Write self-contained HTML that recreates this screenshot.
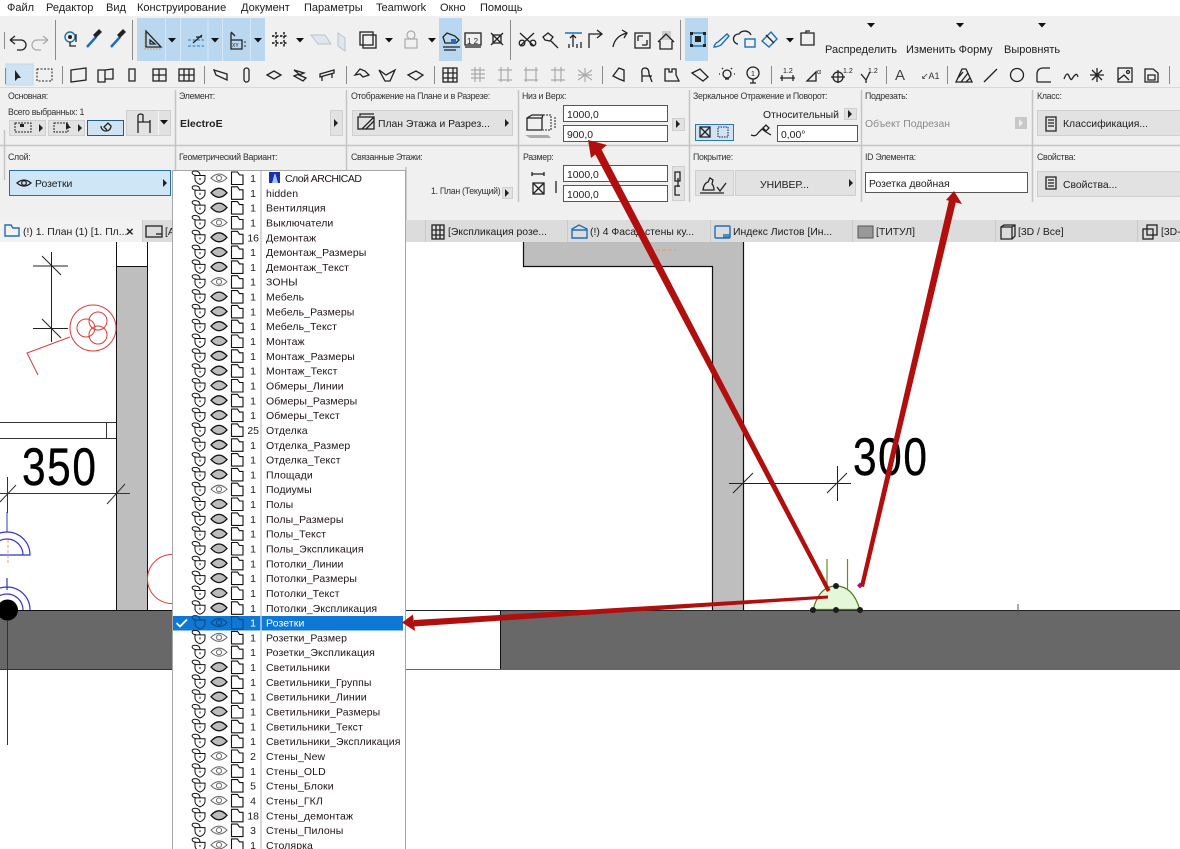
<!DOCTYPE html>
<html lang="ru"><head><meta charset="utf-8"><title>ARCHICAD</title>
<style>
html,body{margin:0;padding:0;background:#fff;width:1180px;height:849px;overflow:hidden}
svg{display:block;font-family:"Liberation Sans",sans-serif;font-size:11px;fill:#1c1c1c;filter:blur(.3px)}
.m{font-size:11px}
.l{font-size:8.8px;letter-spacing:-.3px;fill:#333}
.t{font-size:10.4px}
.r{font-size:10.5px;letter-spacing:.1px;fill:#1e1416}
.n{font-size:10.5px;text-anchor:end}
.i{fill:none;stroke:#222;stroke-width:1.3}
.g{fill:none;stroke:#aaa;stroke-width:1.2}
.b{fill:none;stroke:#1e6fb5;stroke-width:1.4}
.btn{fill:#e2e2e2;stroke:#cfcfcf}
.inp{fill:#fff;stroke:#555;stroke-width:1}
.sep{stroke:#8a8a8a;stroke-width:1}
.vs{stroke:#c4c4c4;stroke-width:1.5}
</style></head><body>
<svg width="1180" height="849" viewBox="0 0 1180 849" xmlns="http://www.w3.org/2000/svg">
<defs>
<g id="lk"><path d="M195-2.500h10v3.500q0 3.500-5 5.500q-5-2-5-5.500z" fill="#fff" stroke="#111" stroke-width="1"/><path d="M196-2.500C191-3.500 191-7 195-7C198-7 200-5.500 200-2.500" fill="none" stroke="#111" stroke-width="1"/><path d="M200 0v2" stroke="#111"/></g>
<g id="sh"><path d="M231.500-6h6l2 3h3.500v9.500h-11.500z" fill="#fff" stroke="#111" stroke-width="1.100"/></g>
<g id="rc"><use href="#lk"/><path d="M211 0Q219-9 227 0Q219 9 211 0z" fill="#bcbcbc" stroke="#111" stroke-width="1.300"/><use href="#sh"/></g>
<g id="ro"><use href="#lk"/><path d="M211 0Q219-8 227 0Q219 8 211 0z" fill="#fff" stroke="#666" stroke-width="1"/><circle cx="219" cy="0" r="2.500" fill="none" stroke="#666"/><use href="#sh"/></g>
<path id="ar" d="M0 0h8l-4 4.500z" fill="#111"/>
<path id="ra" d="M0 0l4 4-4 4z" fill="#222"/>
</defs>

<!-- menu bar -->
<rect width="1180" height="16" fill="#fff"/>
<text x="7" y="11" class="m">Файл</text><text x="46" y="11" class="m">Редактор</text><text x="106" y="11" class="m">Вид</text><text x="137" y="11" class="m">Конструирование</text><text x="241" y="11" class="m">Документ</text><text x="304" y="11" class="m">Параметры</text><text x="376" y="11" class="m">Teamwork</text><text x="440" y="11" class="m">Окно</text><text x="480" y="11" class="m">Помощь</text>
<rect y="16" width="1180" height="204" fill="#f0f0f0"/>

<!-- toolbar 1 -->
<rect x="137" y="18" width="128" height="43" fill="#b9d8f0"/>
<path d="M165.500 18v43M180.500 18v43M208 18v43M222.500 18v43M250.500 18v43" stroke="#d5e6f4"/>
<rect x="439" y="18" width="23" height="43" fill="#b9d8f0"/>
<rect x="685" y="18" width="23" height="43" fill="#b9d8f0"/>
<path d="M4.500 32v17M55.500 20v40M132.500 20v40M510.500 20v40M680.500 20v40" class="sep"/>
<path d="M10 40h11a5 5 0 0 1 0 10h-4M10 40l5-4M10 40l5 4" class="i" stroke-width="1.400"/>
<path d="M48 40h-11a5 5 0 0 0 0 10h4M48 40l-5-4M48 40l-5 4" class="g"/>
<circle cx="70" cy="37" r="5" class="b"/><circle cx="70" cy="37" r="2" fill="#222"/><path d="M70 42v4h6M76 34v8" class="i"/>
<path d="M87 47l9-10" stroke="#1e6fb5" stroke-width="2.500"/><path d="M93 35l6-6 3 3-6 6z" fill="#222"/>
<path d="M111 47l9-10" stroke="#1e6fb5" stroke-width="2.500"/><path d="M117 35l6-6 3 3-6 6z" fill="#222"/>
<path d="M146 31v16h15zM150 40v4h5z" class="i" stroke-width="1.500"/>
<path d="M145 33v16h16" stroke="#d09040" fill="none" stroke-dasharray="1.500 1.500"/>
<use href="#ar" x="168" y="38"/>
<path d="M188 40h16M188 46h16" stroke="#2a78b8" stroke-dasharray="3 1.500"/><path d="M193 43l9-8M196 37h6" class="i"/>
<use href="#ar" x="211" y="38"/>
<path d="M231 33v7h11v9h-11v-9" class="i"/><path d="M231 32l4 4" class="i"/><text x="232" y="47" font-size="5">XY</text><circle cx="245" cy="42" r=".8"/><circle cx="245" cy="46" r=".8"/>
<use href="#ar" x="254" y="38"/>
<path d="M272 36h16M272 43h16M276 32v16M284 32v16" stroke="#111" stroke-dasharray="2.500 1.500" stroke-width="1.400"/><use href="#ar" x="296" y="38"/>
<path d="M311 35h14l6 9h-13z" fill="#dfe6ee" stroke="#b8c4d0"/><path d="M338 33l7 5v13l-7-5z" fill="#dfe6ee" stroke="#b8c4d0"/>
<rect x="360" y="32" width="13" height="13" class="i" stroke-width="1.500"/><rect x="363" y="35" width="13" height="13" class="i" stroke="#666"/><use href="#ar" x="385" y="38"/>
<circle cx="411" cy="35" r="4" class="g"/><rect x="405" y="39" width="12" height="9" class="g"/><use href="#ar" x="428" y="38"/>
<path d="M443 37l4-4 8 3 4 4-3 3-11 0zM443 47h17M444 50h12" class="i"/><rect x="451" y="39" width="5" height="4" fill="#1e6fb5"/>
<rect x="465" y="33" width="16" height="12" class="i"/><path d="M465 47h16" class="i"/><text x="467" y="44" font-size="8">1 2</text>
<path d="M491 33l12 12M503 33l-12 12" class="i"/><rect x="493" y="35" width="8" height="8" class="i"/>
<path d="M520 33l14 13M520 46l14-13" class="i" stroke-width="1.500"/><circle cx="522" cy="43" r="2.800" class="i"/><circle cx="533" cy="43" r="2.800" class="i"/>
<path d="M543 37l5-4 5 4-3 4-5-1zM551 41l7 7" class="i" stroke-width="1.600"/>
<path d="M565 33h17" class="b"/><path d="M573 36v11M569 48v-4M577 48v-4M581 48v-6" class="i"/><path d="M570 38l3-3 3 3" class="i"/>
<path d="M589 48v-14h13M597 30l5 4-5 4" class="i" stroke-width="1.400"/>
<path d="M613 47q2-11 14-14M622 30l5 3-3 5" class="i" stroke-width="1.400"/>
<rect x="635" y="33" width="15" height="15" class="i"/><path d="M638 36h5M638 36v5M647 45h-5M647 45v-5" class="i"/>
<rect x="662" y="31" width="9" height="9" fill="#ccc"/><path d="M658 42l8-8 8 8M660 41v8h12v-8" class="i" stroke-width="1.700"/>
<rect x="691" y="33" width="14" height="13" class="b"/><path d="M690 32h3v3h-3zM703 32h3v3h-3zM690 44h3v3h-3zM703 44h3v3h-3zM695 36h6v6h-6z" fill="#222"/>
<path d="M714 47q1-4 4-5l9-8 2 2-8 9q-4 2-7 2z" class="b"/>
<path d="M738 44a5 5 0 0 1 1-10a7 7 0 0 1 12 1" class="i"/><rect x="745" y="39" width="10" height="8" class="b"/>
<path d="M762 41l9-9 6 7-8 8z" class="b" stroke-width="1.800"/><path d="M766 35l8 8" class="i"/><use href="#ar" x="786" y="38"/>
<path d="M801 33h13v12h-13zM806 33v-2h4" class="i"/>
<use href="#ar" x="867" y="23"/><use href="#ar" x="956" y="23"/><use href="#ar" x="1038" y="23"/>
<text x="825" y="53" class="m">Распределить</text><text x="906" y="53" class="m">Изменить Форму</text><text x="1004" y="53" class="m">Выровнять</text>

<!-- toolbar 2 -->
<path d="M0 87.500h1180" stroke="#d8d8d8"/>
<rect x="6" y="64" width="27" height="21" fill="#cfe3f3" stroke="#bcd8ee"/>
<path d="M15 70v11l3-3 3 0z" fill="#222"/>
<rect x="37" y="69" width="15" height="12" fill="none" stroke="#222" stroke-dasharray="2 1.500"/>
<path d="M5.500 68v16M62.500 66v18M204.500 66v18M346.500 66v18M434.500 66v18M602.500 66v18M771.500 66v18M886.500 66v18M947.500 66v18M1169.500 66v18" class="sep"/>
<path d="M71 70l15-2v12l-15 2z" class="i"/><path d="M98 70h7v12h-7zM105 70l8-1v10h-8" class="i"/><path d="M129 69h6v12h-6z" class="i"/>
<rect x="153" y="69" width="13" height="12" class="i"/><path d="M159 69v12M153 75h13" class="i"/>
<rect x="179" y="69" width="15" height="12" class="i"/><path d="M184 69v12M189 69v12M179 75h15" class="i"/>
<path d="M214 70l13 4v6l-11-5z" class="i"/><rect x="244" y="68" width="5" height="14" rx="2.500" class="i"/>
<path d="M267 75l7-4 7 4-7 4z" class="i"/><path d="M294 70l10 3-5 2 7 3-3 3-9-5 5-2z" class="i"/><path d="M320 74l14-4v3l-14 4zM322 76v5M332 73v5" class="i"/>
<path d="M355 75l5-6 5 2 4 4-6 2-3-3z" class="i"/><path d="M379 70l7 5 9-5-5 11-5 0z" class="i"/>
<path d="M408 75l8-4 7 4-7 5z" class="i"/>
<rect x="443" y="68" width="14" height="14" class="i"/><path d="M448 68v14M453 68v14M443 73h14M443 78h14" class="i"/>
<path d="M471 70h14M471 74h14M471 78h14M475 67v15M480 67v15" class="g"/><path d="M498 70h14M498 80h14M501 67v15M508 67v15" class="g"/><path d="M524 70h14M524 80h14M526 67v15M536 67v15" class="g"/><path d="M551 70h14M551 80h14M555 67v15M561 67v15" class="g"/><path d="M578 70l14 10M592 70l-14 10M578 75h14M585 68v14" class="g"/>
<path d="M613 76l6-8 5 2v11l-5-2z" class="i"/><path d="M642 82v-8q-1-6 3-6t4 6l3 8M642 76h10" class="i"/><path d="M665 69h4v3h3v-3h4v6l3 6h-14z" class="i"/><path d="M692 73l8-4 8 8-5 4z" class="i"/>
<circle cx="727" cy="74" r="4" class="i"/><path d="M725 79h4M720 74h-1M735 74h-1M722 68l1 1M732 68l-1 1" class="i"/>
<circle cx="753" cy="73" r="6" class="i"/><path d="M753 79v4M750 83h6" class="i"/><text x="751" y="76" font-size="7">1</text>
<path d="M780 78h15M782 75v6M793 75v6" class="i"/><text x="783" y="73" font-size="7">1.2</text>
<path d="M807 81l9-9v9zM807 81h9" class="i"/><text x="817" y="74" font-size="7">α</text>
<circle cx="838" cy="77" r="5" class="i"/><path d="M838 70v13M831 77h14" class="i"/><text x="843" y="73" font-size="7">1.2</text>
<path d="M861 74l5 6 4-8M866 80v3" class="i"/><text x="868" y="73" font-size="7">1.2</text>
<text x="895" y="80" font-size="15" fill="#444">A</text><text x="921" y="79" font-size="9" fill="#333">↙A1</text>
<path d="M956 82l6-13h4l6 13zM958 78l5-6M961 82l7-9M966 82l4-4" class="i"/>
<path d="M984 82l13-13" class="i"/><circle cx="1017" cy="75" r="6.500" class="i"/><path d="M1037 82h14M1037 82v-9q1-5 6-5h7" class="i"/><path d="M1064 79q3-8 5-3t3 3 3-4 3 2" class="i"/>
<path d="M1097 68v14M1090 75h14M1092 70l10 10M1102 70l-10 10" class="i"/>
<rect x="1118" y="68" width="14" height="14" class="i"/><path d="M1118 80l6-5 5 5" class="i"/><circle cx="1128" cy="72" r="1.500" class="i"/>
<path d="M1145 69h8l5 4v9h-13zM1148 75h7v5h-7z" class="i"/>

<!-- info box structure -->
<path d="M0 145.500h1180" stroke="#c4c4c4" stroke-width="1.500"/>
<path d="M175.500 90v112M346.500 90v112M518.500 90v112M689.500 90v112M861.500 90v112M1032.500 90v112M4.500 130v50" class="vs"/>
<text x="8" y="99" class="l">Основная:</text><text x="179" y="99" class="l">Элемент:</text><text x="351" y="99" class="l">Отображение на Плане и в Разрезе:</text><text x="522" y="99" class="l">Низ и Верх:</text><text x="693" y="99" class="l">Зеркальное Отражение и Поворот:</text><text x="865" y="99" class="l">Подрезать:</text><text x="1037" y="99" class="l">Класс:</text>
<text x="8" y="160" class="l">Слой:</text><text x="179" y="160" class="l">Геометрический Вариант:</text><text x="351" y="160" class="l">Связанные Этажи:</text><text x="523" y="160" class="l">Размер:</text><text x="693" y="160" class="l">Покрытие:</text><text x="865" y="160" class="l">ID Элемента:</text><text x="1037" y="160" class="l">Свойства:</text>
<text x="8" y="115" class="l">Всего выбранных: 1</text>
<rect x="9.500" y="120.500" width="36" height="15" class="btn"/><rect x="15" y="123" width="16" height="9" fill="none" stroke="#222" stroke-dasharray="2 1"/><path d="M20 124h4v3h-4z" fill="#222"/><use href="#ra" x="39" y="124"/>
<rect x="48.500" y="120.500" width="36" height="15" class="btn"/><rect x="54" y="123" width="14" height="9" fill="none" stroke="#222" stroke-dasharray="2 1"/><path d="M66 122v8l2-2 3 0z" fill="#222"/><use href="#ra" x="78" y="124"/>
<rect x="87.500" y="120.500" width="36" height="15" fill="#cfe3f3" stroke="#1e5f8a"/><path d="M101 126a5 5 0 1 0 10 0l-3-3-4 4 3 3" class="i"/>
<rect x="126.500" y="110.500" width="44" height="25" class="btn"/><path d="M138 115v18M138 122h12v11M150 122v-2M138 115q3-2 5 0v7" class="i"/><path d="M158.500 111v24" stroke="#f4f4f4"/><use href="#ar" x="160" y="120"/>
<text x="180" y="127" font-weight="bold" font-size="10.500" fill="#222">ElectroE</text>
<rect x="330.500" y="110.500" width="12" height="25" class="btn"/><use href="#ra" x="334" y="119"/>
<rect x="352.500" y="110.500" width="160" height="25" class="btn"/><rect x="358" y="117" width="16" height="12" class="i" stroke-width="1.400"/><path d="M362 129l12-12M366 129l8-8M360 116v-2h14" class="i"/>
<text x="378" y="127" class="t">План Этажа и Разрез...</text><use href="#ra" x="505" y="119"/>
<path d="M527 118l5-3h11l-1 3v12h-15zM527 118h15" class="i"/><path d="M525 135h23l3 3h-21z" fill="#aaa"/><path d="M543 115h8v15h-8M555 117v12" fill="none" stroke="#222" stroke-dasharray="2 1"/>
<rect x="563.500" y="105.500" width="104" height="16" class="inp"/><rect x="563.500" y="125.500" width="104" height="16" class="inp"/><text x="567" y="118" class="t">1000,0</text><text x="567" y="138" class="t">900,0</text>
<rect x="672.500" y="118.500" width="12" height="12" class="btn"/><use href="#ra" x="676" y="120"/>
<text x="763" y="118" class="t">Относительный</text><rect x="844.500" y="108.500" width="12" height="11" class="btn"/><use href="#ra" x="848" y="110"/>
<rect x="695.500" y="124.500" width="38" height="16" fill="#cfe3f3" stroke="#2a7ab0"/><rect x="700" y="127" width="10" height="10" class="i"/><path d="M700 127l10 10M710 127l-10 10" class="i"/><rect x="718" y="127" width="10" height="10" fill="none" stroke="#222" stroke-dasharray="1.500 1"/>
<path d="M751 135q5 2 7-2l4-4 4 3 5 3M763 128l3-3 3 3-3 3z" class="i"/>
<rect x="777.500" y="125.500" width="80" height="16" class="inp"/><text x="781" y="138" class="t">0,00°</text>
<text x="865" y="127" class="t" style="fill:#8a8a8a">Объект Подрезан</text><rect x="1015" y="117" width="12" height="12" fill="#c8c8c8"/><path d="M1019 119l4 4-4 4z" fill="#eee"/>
<rect x="1037.500" y="110.500" width="150" height="25" class="btn"/><path d="M1046 117h10v14h-10zM1048 120h6M1048 123h6M1048 126h6" class="i"/><text x="1063" y="127" class="t">Классификация...</text>

<rect x="9.500" y="170.500" width="161" height="25" fill="#cfe6f6" stroke="#2a6f9c"/><path d="M17 183q7-6 14 0q-7 6-14 0z" class="i"/><circle cx="24" cy="183" r="2.300" class="i"/><text x="35" y="187" class="t">Розетки</text><use href="#ra" x="163" y="179"/>
<text x="431" y="194" class="l">1. План (Текущий)</text><rect x="502.500" y="187.500" width="10" height="11" class="btn" stroke="#bbb"/><use href="#ra" x="505" y="189"/>
<rect x="405" y="167" width="2" height="53" fill="#ccc"/>
<path d="M532 174h12M532 172v4M544 172v4M556 181v12" class="i"/><rect x="533" y="183" width="11" height="11" class="i"/><path d="M533 183l11 11M544 183l-11 11" class="i"/>
<rect x="563.500" y="165.500" width="104" height="16" class="inp"/><rect x="563.500" y="185.500" width="104" height="16" class="inp"/><text x="567" y="178" class="t">1000,0</text><text x="567" y="198" class="t">1000,0</text>
<rect x="672.500" y="166.500" width="12" height="34" class="btn"/><path d="M675 172h5v9h-5zM680 186h-5v9h5M678 178v9" class="i"/>
<rect x="695.500" y="170.500" width="38" height="25" class="btn"/><path d="M703 190q1-7 5-8l2-4 3 2-1 4q2 2 2 6zM717 187l3 4 6-8" class="i"/><path d="M700 193h24" class="i"/>
<rect x="735.500" y="170.500" width="120" height="25" class="btn"/><text x="760" y="188" class="t">УНИВЕР...</text><use href="#ra" x="849" y="179"/>
<rect x="865.500" y="172.500" width="162" height="20" class="inp"/><text x="869" y="187" class="t">Розетка двойная</text>
<rect x="1037.500" y="171.500" width="150" height="25" class="btn"/><path d="M1046 177h10v12h-10zM1048 180h6M1048 183h6M1048 186h6" class="i"/><text x="1063" y="188" class="t">Свойства...</text>

<!-- tabs -->
<rect y="220" width="1180" height="22" fill="#dcdcdc"/>
<rect y="220" width="142" height="22" fill="#f2f2f2"/>
<path d="M142.500 220v22M425.500 220v22M567.500 220v22M710.500 220v22M852.500 220v22M995.500 220v22M1137.500 220v22" stroke="#c9c9c9"/>
<path d="M5 236v-11h6l2 3h6v8z" class="b"/><text x="23" y="235" class="t">(!) 1. План (1) [1. Пл...</text><text x="126" y="236" font-size="13" font-weight="bold" fill="#222">×</text>
<rect x="146" y="226" width="16" height="11" class="i"/><path d="M156 234h6" class="i"/><text x="165" y="235" class="t">[А</text>
<rect x="432" y="225" width="12" height="14" class="i"/><path d="M436 225v14M440 225v14M432 230h12M432 235h12" class="i"/><text x="448" y="235" class="t">[Экспликация розе...</text>
<path d="M572 229l7-4 8 4v9h-15zM572 230h15" class="b"/><text x="590" y="235" class="t">(!) 4 Фасад стены ку...</text>
<rect x="715" y="226" width="15" height="12" rx="1" class="b"/><path d="M723 235h7M723 237h7" class="b"/><text x="733" y="235" class="t">Индекс Листов [Ин...</text>
<rect x="858" y="226" width="15" height="12" fill="#999" stroke="#555"/><text x="876" y="235" class="t">[ТИТУЛ]</text>
<path d="M1001 227l3-2h11v11l-3 3h-11zM1001 227h11v12M1012 227l3-2" class="i"/><text x="1018" y="235" class="t">[3D / Все]</text>
<rect x="1143" y="229" width="10" height="10" class="i"/><rect x="1147" y="225" width="10" height="10" class="i"/><text x="1161" y="235" class="t">[3D-</text>

<!-- left drawing -->
<rect x="116" y="266" width="31" height="344" fill="#bebebe"/>
<path d="M116.500 242v368M147.500 242v368M116 266.500h31" stroke="#111" fill="none"/>
<rect y="610" width="172" height="59" fill="#686868"/>
<path d="M0 610.500h172" stroke="#111"/><path d="M0 669.500h172" stroke="#333"/>
<path d="M51.500 252v90M33 266h35M33 328.500h35M42 256l19 19M42 319l19 19" stroke="#222" fill="none"/>
<circle cx="93" cy="328" r="23" fill="none" stroke="#d83a3a"/><circle cx="98" cy="321" r="9" fill="none" stroke="#d83a3a"/><circle cx="86" cy="328" r="9" fill="none" stroke="#d83a3a"/><circle cx="98" cy="335" r="9" fill="none" stroke="#d83a3a"/>
<path d="M70 337L27 353L38 375" fill="none" stroke="#d83a3a"/>
<path d="M0 422.500h116M0 438.500h116M106.500 422v16" stroke="#333" fill="none"/>
<text transform="translate(22,485) scale(.8,1)" font-size="53" letter-spacing="2" fill="#000" stroke="#000" stroke-width=".4">350</text>
<path d="M0 493.500h130M107 504l18-20M0 502l16-17M7.500 477v36" stroke="#333" fill="none"/>
<path d="M7 512v20" stroke="#3333c8"/><path d="M-16 555a23 23 0 0 1 46 0zM-9 555a16 16 0 0 1 32 0" fill="none" stroke="#3333c8" stroke-width="1.200"/>
<path d="M8 540v25" stroke="#e8a060" stroke-dasharray="3 2"/>
<path d="M-16 610a23 23 0 0 1 46 0M-9 610a16 16 0 0 1 32 0M7 578v12" fill="none" stroke="#3333c8" stroke-width="1.200"/>
<circle cx="7.500" cy="610" r="10.500" fill="#000"/><path d="M7.500 620v125" stroke="#333"/>
<circle cx="172" cy="579" r="24.500" fill="none" stroke="#d83a3a"/>

<!-- right drawing -->
<path d="M523 242h220v368h-31V266H523z" fill="#bebebe"/>
<path d="M523.500 242v24.500H712.500V610M743.500 242v368" fill="none" stroke="#111" stroke-width="1.200"/>
<path d="M650 250h26" stroke="#e8a060" stroke-dasharray="4 2"/>
<rect x="500" y="610" width="680" height="59" fill="#686868"/>
<path d="M405 610.500h775" stroke="#222"/><path d="M405 669.500h775" stroke="#666"/><path d="M500.500 610v59" stroke="#111"/>
<path d="M1018 604v10" stroke="#555"/>
<path d="M729 483.500h122M733 493l20-20M837.500 466v35M827 493l20-20" stroke="#222" fill="none"/>
<text transform="translate(853,475) scale(.8,1)" font-size="53" letter-spacing="2" fill="#000" stroke="#000" stroke-width=".4">300</text>
<path d="M813 610q6-24 23-24t24 24z" fill="#e4f7d8" stroke="none"/>
<path d="M813 610q6-24 23-24t24 24M813 609.500h47" fill="none" stroke="#4e7a18" stroke-width="1.200"/>
<path d="M827 559v30M847.500 559v30" stroke="#6e8a20" stroke-width="1.200"/>
<circle cx="813" cy="610" r="3"/><circle cx="836" cy="610" r="3"/><circle cx="860" cy="610" r="3"/><circle cx="836" cy="586" r="3"/>
<path d="M860 582.500l3 3-3 3-3-3z" fill="#a010a0"/>

<!-- menu -->
<rect x="172.500" y="170.500" width="233" height="690" fill="#fff" stroke="#a6a6a6"/>
<path d="M261 171v680" stroke="#b0b0b0"/>
<rect x="173" y="616" width="230" height="14.500" fill="#0f78d4"/>
<path d="M261 616v15" stroke="#fff"/>
<path d="M176.500 623l3.500 3.500 7-7" fill="none" stroke="#fff" stroke-width="1.800"/>
<use href="#ro" y="178"/><use href="#rc" y="192.800"/><use href="#rc" y="207.600"/><use href="#ro" y="222.500"/><use href="#rc" y="237.300"/><use href="#rc" y="252.100"/><use href="#rc" y="266.900"/><use href="#ro" y="281.700"/><use href="#rc" y="296.600"/><use href="#rc" y="311.400"/><use href="#rc" y="326.200"/><use href="#rc" y="341"/><use href="#rc" y="355.800"/><use href="#rc" y="370.700"/><use href="#rc" y="385.500"/><use href="#rc" y="400.300"/><use href="#rc" y="415.100"/><use href="#rc" y="429.900"/><use href="#rc" y="444.800"/><use href="#rc" y="459.600"/><use href="#rc" y="474.400"/><use href="#ro" y="489.200"/><use href="#rc" y="504"/><use href="#rc" y="518.900"/><use href="#rc" y="533.700"/><use href="#rc" y="548.500"/><use href="#rc" y="563.300"/><use href="#rc" y="578.100"/><use href="#rc" y="593"/><use href="#rc" y="607.800"/>
<g transform="translate(0,622.600)" fill="none" stroke="#0a4a86" stroke-width="1.100"><path d="M195-2.500h10v3.500q0 3.500-5 5.500q-5-2-5-5.500zM196-2.500C191-3.500 191-7 195-7C198-7 200-5.500 200-2.500"/><path d="M211 0Q219-8 227 0Q219 8 211 0z"/><circle cx="219" cy="0" r="2.500"/><path d="M231.500-6h6l2 3h3.500v9.500h-11.500z"/></g>
<use href="#ro" y="637.400"/><use href="#ro" y="652.200"/><use href="#rc" y="667.100"/><use href="#rc" y="681.900"/><use href="#rc" y="696.700"/><use href="#rc" y="711.500"/><use href="#rc" y="726.300"/><use href="#rc" y="741.200"/><use href="#ro" y="756"/><use href="#ro" y="770.800"/><use href="#ro" y="785.600"/><use href="#ro" y="800.400"/><use href="#rc" y="815.300"/><use href="#ro" y="830.100"/><use href="#ro" y="844.900"/>
<rect x="269" y="172" width="11" height="11" fill="#1a2fb0"/><path d="M272 183l2.500-9h1l2.500 9z" fill="#9fc4f0"/>
<text class="n" x="256" y="182">1</text><text class="n" x="256" y="196.800">1</text><text class="n" x="256" y="211.600">1</text><text class="n" x="256" y="226.500">1</text><text class="n" x="259" y="241.300">16</text><text class="n" x="256" y="256.100">1</text><text class="n" x="256" y="270.900">1</text><text class="n" x="256" y="285.700">1</text><text class="n" x="256" y="300.600">1</text><text class="n" x="256" y="315.400">1</text><text class="n" x="256" y="330.200">1</text><text class="n" x="256" y="345">1</text><text class="n" x="256" y="359.800">1</text><text class="n" x="256" y="374.700">1</text><text class="n" x="256" y="389.500">1</text><text class="n" x="256" y="404.300">1</text><text class="n" x="256" y="419.100">1</text><text class="n" x="259" y="433.900">25</text><text class="n" x="256" y="448.800">1</text><text class="n" x="256" y="463.600">1</text><text class="n" x="256" y="478.400">1</text><text class="n" x="256" y="493.200">1</text><text class="n" x="256" y="508">1</text><text class="n" x="256" y="522.900">1</text><text class="n" x="256" y="537.700">1</text><text class="n" x="256" y="552.500">1</text><text class="n" x="256" y="567.300">1</text><text class="n" x="256" y="582.100">1</text><text class="n" x="256" y="597">1</text><text class="n" x="256" y="611.800">1</text><text class="n" x="256" y="626.600" style="fill:#fff">1</text><text class="n" x="256" y="641.400">1</text><text class="n" x="256" y="656.200">1</text><text class="n" x="256" y="671.100">1</text><text class="n" x="256" y="685.900">1</text><text class="n" x="256" y="700.700">1</text><text class="n" x="256" y="715.500">1</text><text class="n" x="256" y="730.300">1</text><text class="n" x="256" y="745.200">1</text><text class="n" x="256" y="760">2</text><text class="n" x="256" y="774.800">1</text><text class="n" x="256" y="789.600">5</text><text class="n" x="256" y="804.400">4</text><text class="n" x="259" y="819.300">18</text><text class="n" x="256" y="834.100">3</text><text class="n" x="256" y="848.900">1</text>
<text class="r" x="285" y="182" textLength="77">Слой ARCHICAD</text>
<text class="r" x="266" y="196.800">hidden</text>
<text class="r" x="266" y="211.600">Вентиляция</text>
<text class="r" x="266" y="226.500">Выключатели</text>
<text class="r" x="266" y="241.300">Демонтаж</text>
<text class="r" x="266" y="256.100">Демонтаж_Размеры</text>
<text class="r" x="266" y="270.900">Демонтаж_Текст</text>
<text class="r" x="266" y="285.700">ЗОНЫ</text>
<text class="r" x="266" y="300.600">Мебель</text>
<text class="r" x="266" y="315.400">Мебель_Размеры</text>
<text class="r" x="266" y="330.200">Мебель_Текст</text>
<text class="r" x="266" y="345">Монтаж</text>
<text class="r" x="266" y="359.800">Монтаж_Размеры</text>
<text class="r" x="266" y="374.700">Монтаж_Текст</text>
<text class="r" x="266" y="389.500">Обмеры_Линии</text>
<text class="r" x="266" y="404.300">Обмеры_Размеры</text>
<text class="r" x="266" y="419.100">Обмеры_Текст</text>
<text class="r" x="266" y="433.900">Отделка</text>
<text class="r" x="266" y="448.800">Отделка_Размер</text>
<text class="r" x="266" y="463.600">Отделка_Текст</text>
<text class="r" x="266" y="478.400">Площади</text>
<text class="r" x="266" y="493.200">Подиумы</text>
<text class="r" x="266" y="508">Полы</text>
<text class="r" x="266" y="522.900">Полы_Размеры</text>
<text class="r" x="266" y="537.700">Полы_Текст</text>
<text class="r" x="266" y="552.500">Полы_Экспликация</text>
<text class="r" x="266" y="567.300">Потолки_Линии</text>
<text class="r" x="266" y="582.100">Потолки_Размеры</text>
<text class="r" x="266" y="597">Потолки_Текст</text>
<text class="r" x="266" y="611.800">Потолки_Экспликация</text>
<text class="r" x="266" y="626.600" style="fill:#fff">Розетки</text>
<text class="r" x="266" y="641.400">Розетки_Размер</text>
<text class="r" x="266" y="656.200">Розетки_Экспликация</text>
<text class="r" x="266" y="671.100">Светильники</text>
<text class="r" x="266" y="685.900">Светильники_Группы</text>
<text class="r" x="266" y="700.700">Светильники_Линии</text>
<text class="r" x="266" y="715.500">Светильники_Размеры</text>
<text class="r" x="266" y="730.300">Светильники_Текст</text>
<text class="r" x="266" y="745.200">Светильники_Экспликация</text>
<text class="r" x="266" y="760">Стены_New</text>
<text class="r" x="266" y="774.800">Стены_OLD</text>
<text class="r" x="266" y="789.600">Стены_Блоки</text>
<text class="r" x="266" y="804.400">Стены_ГКЛ</text>
<text class="r" x="266" y="819.300">Стены_демонтаж</text>
<text class="r" x="266" y="834.100">Стены_Пилоны</text>
<text class="r" x="266" y="848.900">Столярка</text>

<!-- red arrows -->
<g fill="#b10e0e" stroke="none">
<path d="M830.500 590L827 592L594 152L601 148.500z"/><path d="M588 140L607 145L591 158z"/>
<path d="M864 587L860 586L949 200L956 201.500z"/><path d="M954 191L962 204L946 200z"/>
<path d="M828 595.500L828 598.500L414 626.500L414 620z"/><path d="M402 622.500L413 614.500L415 631z"/>
</g>
</svg>
</body></html>
